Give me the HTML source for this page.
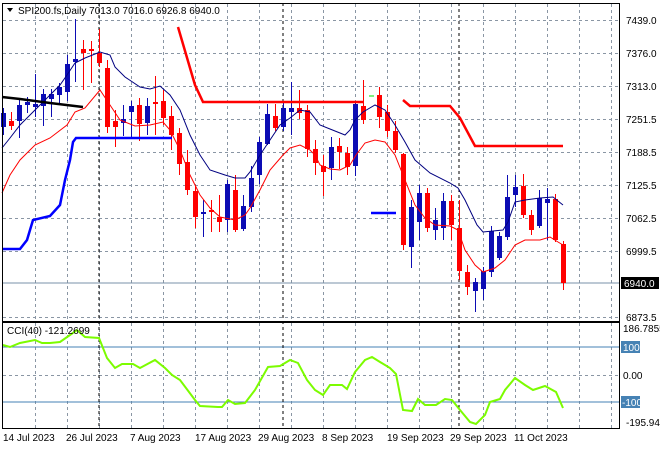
<!DOCTYPE html>
<html><head><meta charset="utf-8"><style>
body{margin:0;background:#fff;width:660px;height:450px;overflow:hidden;font-family:"Liberation Sans",sans-serif}
svg{display:block}
text{font-family:"Liberation Sans",sans-serif;font-size:10px;fill:#000}
</style></head><body>
<svg id="s" width="660" height="450" xmlns="http://www.w3.org/2000/svg">
<g id="grid" stroke="#8a96a4" stroke-width="1" stroke-dasharray="3,3" fill="none"></g>
<line x1="2" y1="283" x2="619" y2="283" stroke="#7890a8"/>
<line x1="2" y1="347" x2="619" y2="347" stroke="#4682b4"/>
<line x1="2" y1="402" x2="619" y2="402" stroke="#4682b4"/>
<g stroke="#000" stroke-dasharray="3,3"><line x1="99" y1="3" x2="99" y2="428"/><line x1="283" y1="3" x2="283" y2="428"/><line x1="459" y1="3" x2="459" y2="428"/></g>
<g id="c"></g>
<polyline fill="none" stroke="#000080" stroke-width="1" points="2,148 10,138 20,125 30,115 40,105 50,95 60,85 67,75 75,63 85,58 100,52 110,55 115,67 125,77 140,87 150,89 160,86 170,95 180,110 190,135 200,155 210,170 225,175 235,178 245,178 250,172 260,155 270,140 280,125 290,118 300,110 310,112 320,125 330,129 345,135 350,130 355,120 363,112 375,105 385,110 395,125 405,142 415,160 430,173 450,183 458,188 465,200 477,225 483,232 503,230 508,222 515,202 525,200 540,198 553,197 563,205"/>
<polyline fill="none" stroke="#f00" stroke-width="1" points="2,193 10,175 20,160 35,145 50,138 67,125 75,112 85,108 100,90 110,105 120,120 135,126 150,125 163,122 170,130 180,150 190,175 200,195 210,208 220,217 235,220 245,215 250,208 260,190 270,170 283,155 290,148 300,145 310,150 315,155 320,165 330,169 340,170 350,165 356,155 365,143 375,140 385,142 395,155 405,180 415,205 425,218 435,225 450,226 458,230 465,250 475,265 483,272 495,268 505,260 515,245 525,240 540,240 550,237 558,242 563,245"/>
<polyline fill="none" stroke="#000" stroke-width="2.5" points="2,97 20,99 50,103 83,107"/>
<polyline fill="none" stroke="#0000ff" stroke-width="2.5" points="2,249 20,249 27,240 33,220 50,216 60,205 65,180 70,160 73,142 76,138 172,138"/>
<line x1="371" y1="213" x2="396" y2="213" stroke="#0000ff" stroke-width="2.5"/>
<polyline fill="none" stroke="#f00" stroke-width="2.5" points="178,27 195,85 203,102 363,102"/>
<line x1="369" y1="96" x2="374" y2="96" stroke="#00e000" stroke-width="1"/>
<polyline fill="none" stroke="#f00" stroke-width="2.5" points="403,100 410,106 450,106 460,118 475,146 563,146"/>
<polyline fill="none" stroke="#7cfc00" stroke-width="2" points="3,345 10,347 20,343 35,340 42,343 50,343 60,342 70,335 77,330 85,337 99,338 107,358 115,368 122,364 133,364 140,368 155,360 165,368 172,375 180,380 195,400 200,406 218,407 222,407 228,400 235,404 245,403 255,390 268,367 280,366 290,360 298,363 307,380 315,390 323,395 330,385 342,385 347,389 355,372 365,360 372,357 380,362 390,368 396,374 403,410 412,411 418,399 425,405 436,405 445,399 452,400 460,410 470,422 476,424 485,415 490,402 500,399 505,390 515,378 525,385 533,390 545,386 556,392 563,408"/>
<rect x="2.5" y="3.5" width="617" height="318" fill="none" stroke="#000"/>
<rect x="2.5" y="322.5" width="617" height="106" fill="none" stroke="#000"/>
<path d="M7,8 L13,8 L10,12 Z" fill="#000"/>
<text x="18" y="14">SPI200.fs,Daily  7013.0 7016.0 6926.8 6940.0</text>
<text x="7" y="334" fill="#222">CCI(40) -121.2699</text>
<g id="pl"></g>
<rect x="621" y="277" width="38" height="12" fill="#000"/>
<text x="624" y="287" fill="#fff" style="fill:#fff">6940.0</text>
<text x="623" y="332">186.7855</text>
<rect x="621" y="341" width="19" height="12" fill="#4682b4"/>
<text x="623" y="351" style="fill:#fff">100</text>
<text x="623" y="379">0.00</text>
<rect x="621" y="396" width="19" height="12" fill="#4682b4"/>
<text x="622" y="406" style="fill:#fff">-100</text>
<text x="626" y="426">-195.949</text>
<g>
<text x="3" y="441">14 Jul 2023</text><text x="66" y="441">26 Jul 2023</text><text x="130" y="441">7 Aug 2023</text><text x="195" y="441">17 Aug 2023</text><text x="258" y="441">29 Aug 2023</text><text x="322" y="441">8 Sep 2023</text><text x="387" y="441">19 Sep 2023</text><text x="450" y="441">29 Sep 2023</text><text x="514" y="441">11 Oct 2023</text>
</g>
<g>
<text x="626" y="24">7439.0</text><text x="626" y="57">7376.0</text><text x="626" y="90">7313.0</text><text x="626" y="123">7251.5</text><text x="626" y="156">7188.5</text><text x="626" y="189">7125.5</text><text x="626" y="222">7062.5</text><text x="626" y="255">6999.5</text><text x="626" y="321">6873.5</text>
</g>
</svg>
<script>
var ns="http://www.w3.org/2000/svg",g=document.getElementById('grid'),c=document.getElementById('c');
function L(p,x1,y1,x2,y2,col,w){var l=document.createElementNS(ns,'line');l.setAttribute('x1',x1);l.setAttribute('y1',y1);l.setAttribute('x2',x2);l.setAttribute('y2',y2);if(col)l.setAttribute('stroke',col);if(w)l.setAttribute('stroke-width',w);p.appendChild(l);}
[20,53,86,119,152,185,218,251,317,375].forEach(function(y){L(g,3,y+.5,619,y+.5)});
for(var x=35;x<619;x+=32){L(g,x+.5,4,x+.5,321);L(g,x+.5,323,x+.5,428);}
[620,621].forEach(function(){});
var d=[
['b',113,127,108,135],['r',121,126,112,130],['b',105,121,100,138],['b',102,105,97,113],['b',104,107,74,117],['b',94,106,89,126],['b',94,99,89,117],['b',87,95,83,103],['b',64,92,55,101],['b',59,62,19,82],
['r',49,53,40,90],['r',49,51,41,83],['r',53,63,29,67],['r',68,127,60,133],['r',121,127,110,147],['b',119,123,105,136],['b',106,112,101,137],['r',105,124,98,141],['b',106,123,98,135],['r',102,104,76,135],
['r',101,118,90,125],['r',116,135,106,150],['r',133,164,128,175],['r',162,190,150,195],['r',191,217,185,228],['b',212,213,200,237],['r',210,212,200,232],['r',217,222,195,232],['b',184,220,180,232],['r',190,230,175,232],
['b',206,229,195,231],['b',178,207,166,212],['b',142,175,137,184],['b',114,144,104,145],['r',116,128,104,131],['b',108,127,101,131],['b',108,112,82,135],['r',108,113,90,119],['r',110,149,105,157],['r',149,163,140,175],
['r',166,172,155,196],['b',147,168,137,180],['r',146,152,138,169],['r',153,167,147,175],['b',104,166,103,176],['r',106,120,80,124],['n',0,0,0,0],['r',95,117,87,128],['r',112,131,105,137],['r',131,150,121,153],
['r',154,245,153,250],['b',207,247,200,268],['b',193,222,185,240],['r',193,228,188,232],['b',220,230,208,240],['b',201,228,193,240],['r',201,225,195,240],['r',228,271,200,280],['r',272,287,265,295],['b',282,291,278,312],
['b',271,289,267,300],['b',231,272,226,277],['b',236,258,232,260],['b',197,237,175,240],['b',187,195,175,207],['r',186,215,174,218],['r',215,230,210,235],['b',198,226,190,228],['b',199,203,188,240],['r',199,240,194,242],
['r',244,283,241,290]];
d.forEach(function(a,k){if(a[0]=='n')return;var x=3+8*k,col=a[0]=='r'?'#ff0000':'#0c0cb4';L(c,x+.5,a[3],x+.5,a[4],col,1);var r=document.createElementNS(ns,'rect');r.setAttribute('x',x-2);r.setAttribute('y',a[1]);r.setAttribute('width',5);r.setAttribute('height',Math.max(2,a[2]-a[1]));r.setAttribute('fill',col);c.appendChild(r);});
</script>
</body></html>
